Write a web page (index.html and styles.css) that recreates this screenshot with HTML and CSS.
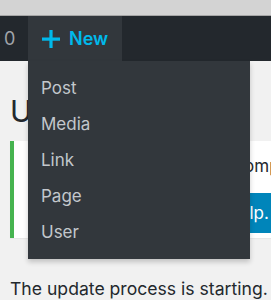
FILE: index.html
```html
<!DOCTYPE html>
<html lang="en">
<head>
    <meta charset="UTF-8">
    <title>Update Plugins</title>
    <link rel="stylesheet" href="styles.css">
</head>
<body>
    <div class="window-top"></div>
    <div class="admin-bar">
        <div class="comments">0</div>
        <div class="new-content">
            <a class="new-link" href="#">
                <svg class="plus" width="18" height="18" viewBox="0 0 18 18">
                    <rect x="0" y="7.5" width="18" height="3.2" fill="#00b9eb"/>
                    <rect x="7.4" y="0" width="3.2" height="18" fill="#00b9eb"/>
                </svg>
                <span>New</span>
            </a>
            <ul class="submenu">
                <li>Post</li>
                <li>Media</li>
                <li>Link</li>
                <li>Page</li>
                <li>User</li>
            </ul>
        </div>
    </div>

    <div class="wrap">
        <h1>Update Plugins</h1>
        <div class="notice">
            <p class="notice-text">Update failed to complete</p>
            <div class="notice-actions">
                <button class="button-primary">Get Help.</button>
            </div>
        </div>
        <p class="status">The update process is starting.</p>
    </div>
</body>
</html>
```

FILE: styles.css
```css
html, body {
    margin: 0;
    overflow: hidden;
}

body {
    font-family: Inter, Roboto, sans-serif;
    background-color: #f1f1f1;
    color: #23282d;
    width: 271px;
    height: 300px;
}

.window-top {
    height: 15px;
    background-color: #d3d3d3;
    border-bottom: 1px solid #a6a6a6;
}

.admin-bar {
    display: flex;
    height: 45px;
    background-color: #23282d;
}

.comments {
    width: 28px;
    box-sizing: border-box;
    padding-left: 4px;
    line-height: 45px;
    font-size: 18px;
    color: #a0a5aa;
}

.new-content {
    position: relative;
    width: 94px;
    background-color: #32373c;
}

.new-link {
    display: flex;
    align-items: center;
    height: 45px;
    padding-left: 14px;
    gap: 9px;
    color: #00b9eb;
    font-size: 18px;
    font-weight: 600;
    text-decoration: none;
}

.submenu {
    position: absolute;
    top: 45px;
    left: 0;
    width: 222px;
    margin: 0;
    padding: 9px 0 9px;
    list-style: none;
    background-color: #32373c;
    box-shadow: 0 3px 5px rgba(0, 0, 0, 0.2);
}

.submenu li {
    height: 36px;
    line-height: 36px;
    padding-left: 13px;
    font-size: 17px;
    color: #c3c7cc;
}

.wrap {
    padding: 0 0 0 10px;
}

.wrap h1 {
    margin: 32px 0 0;
    font-size: 30px;
    font-weight: 400;
    line-height: 36px;
    white-space: nowrap;
}

.notice {
    margin-top: 12px;
    height: 97px;
    width: 300px;
    background-color: #fff;
    border-left: 4px solid #46b450;
    box-shadow: 0 1px 1px rgba(0, 0, 0, 0.04);
}

.notice-text {
    margin: 0;
    padding: 14px 0 0 88px;
    font-size: 17px;
    line-height: 22px;
    white-space: nowrap;
}

.notice-actions {
    padding: 16px 0 0 168px;
}

.button-primary {
    height: 40px;
    padding: 0 12px;
    border: none;
    background-color: #0085ba;
    color: #fff;
    font-family: inherit;
    font-size: 17px;
}

.status {
    margin: 40px 0 0;
    font-size: 17.6px;
    white-space: nowrap;
}
```
